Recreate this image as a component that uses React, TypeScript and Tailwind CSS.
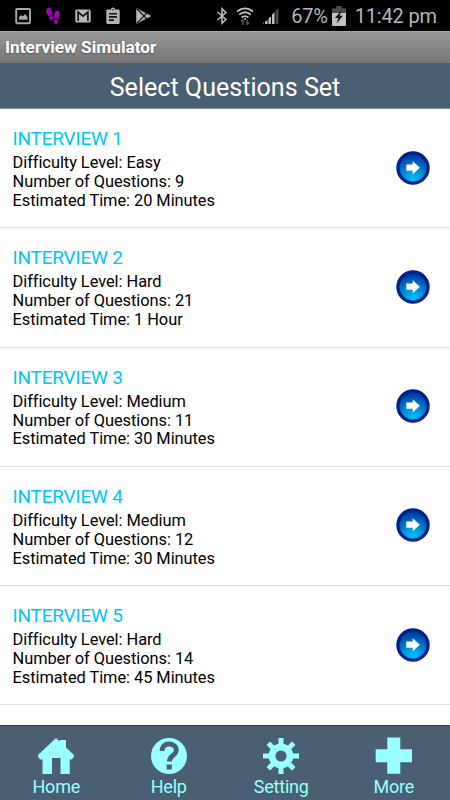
import type { ReactNode } from 'react';

interface InterviewSet {
  title: string;
  difficulty: string;
  questions: number;
  time: string;
}

const interviews: InterviewSet[] = [
  { title: 'INTERVIEW 1', difficulty: 'Easy', questions: 9, time: '20 Minutes' },
  { title: 'INTERVIEW 2', difficulty: 'Hard', questions: 21, time: '1 Hour' },
  { title: 'INTERVIEW 3', difficulty: 'Medium', questions: 11, time: '30 Minutes' },
  { title: 'INTERVIEW 4', difficulty: 'Medium', questions: 12, time: '30 Minutes' },
  { title: 'INTERVIEW 5', difficulty: 'Hard', questions: 14, time: '45 Minutes' },
];

function StatusBar() {
  return (
    <div className="flex h-[31px] shrink-0 items-center justify-between bg-black pr-[13px] pl-[15px] text-[#b5b5b5]">
      <div className="flex items-center gap-[14px]">
        {/* Picture */}
        <svg width="16" height="18" viewBox="0 0 16 18" fill="none">
          <rect x="1.2" y="2" width="13.8" height="14.2" rx="1" stroke="#a8a8a8" strokeWidth="1.9" />
          <path d="M4 12.8V10l2-1.800L8 9.300l2-2.300 2.500 3v2.800z" fill="#a8a8a8" />
        </svg>
        {/* Footsteps */}
        <svg width="16" height="20" viewBox="0 0 16 20" fill="#a300b8">
          <path d="M2 2.400C3.300 .8 5.800 1.500 6.600 4c.5 1.700 .4 3 .7 4.900L3.400 10.300C2 8 .2 5.200 2 2.400z" />
          <path d="M3.800 11l3.700-1.200c1 2.300.6 3.900-.6 4.200C5.200 14.300 4.100 12.800 3.800 11z" />
          <path d="M14 5.200c-2-1.300-4.300 0-4.600 2.200-.2 1.500 0 3-.3 4.900l3.900.7c.8-2.200 3.200-5.800 1-7.800z" />
          <path d="M9 13.300l3.800.7c.1 2.900-.7 4.700-2.200 4.500-1.400-.3-2-2.900-1.600-5.200z" />
        </svg>
        {/* Mail */}
        <svg width="16" height="18" viewBox="0 0 16 18">
          <rect x="0.3" y="2.5" width="15.4" height="13" rx="1.5" fill="#b8b8b8" />
          <path d="M3.100 14V5L8 9.200 12.900 5v9" fill="none" stroke="#111" strokeWidth="1.7" />
        </svg>
        {/* Clipboard */}
        <svg width="16" height="20" viewBox="0 0 16 20">
          <path d="M2.500 3.500H6a2 2 0 014 0h3.500q1.200 0 1.200 1.200v12.100q0 1.200-1.200 1.200h-11q-1.200 0-1.200-1.200V4.700q0-1.200 1.200-1.200z" fill="#b3b3b3" />
          <path d="M4 7.700h8M4 10.900h8M4 14.100h5" stroke="#111" strokeWidth="1.6" />
          <circle cx="8" cy="3.8" r="0.8" fill="#111" />
        </svg>
        {/* Play store */}
        <svg width="18" height="18" viewBox="0 0 18 18">
          <path d="M1.500 1.500l14.500 7.500-14.500 7.500z" fill="#b8b8b8" stroke="#b8b8b8" strokeWidth="0.5" />
          <path d="M1.500 1.500l10.500 10.500M1.500 16.500L12 6" stroke="#111" strokeWidth="1.1" />
        </svg>
      </div>

      <div className="flex items-center pt-px">
        {/* Bluetooth */}
        <svg className="mr-[8px]" width="12" height="18" viewBox="0 0 12 18" fill="none" stroke="#c0c0c0" strokeWidth="1.5">
          <path d="M1.500 5l8.500 7.500-4 3.700V1.800l4 3.700L1.500 13" />
        </svg>
        {/* Wifi */}
        <svg className="mr-[8px]" width="18" height="20" viewBox="0 0 18 20" fill="none" stroke="#c0c0c0" strokeWidth="1.8">
          <path d="M1 5.500Q9-.7 17 5.500M3.200 8.600Q9 4 14.800 8.600M5.600 11.500Q9 8.800 12.400 11.500" />
          <circle cx="9" cy="13" r="1" fill="#c0c0c0" stroke="none" />
          <path d="M7 19v-5.500M5 15.500l2-2.200M11 13.500V19M11 18.800l2.200-2.300" stroke="#555" strokeWidth="1.5" />
        </svg>
        {/* Signal */}
        <svg className="mr-[12px]" width="17" height="18" viewBox="0 0 17 18">
          <path d="M.5 16.500h1.500v-1.200zM3 17h2.500v-4L3 14.800zM6.500 17H9v-7.500l-2.500 2zM10 17h2.500V5L10 7.800z" fill="#c0c0c0" />
          <path d="M13.500 17H16.500V1l-3 3z" fill="#484848" />
        </svg>
        <span className="text-[20px] leading-[31px] tracking-[-0.2px]">67%</span>
        {/* Battery */}
        <svg className="mr-[9px] ml-[4px]" width="14" height="20" viewBox="0 0 14 20">
          <path d="M4.200 0h5.600v2.200H13q1 0 1 1V8H0V3.200q0-1 1-1h3.200z" fill="#4a4a4a" />
          <path d="M0 7h14v12q0 1-1 1H1q-1 0-1-1z" fill="#c0c0c0" />
          <path d="M9.500 4.500L3 12h3.500L4.500 17.500 11 9.800H7.500z" fill="#000" />
        </svg>
        <span className="text-[20px] leading-[31px] tracking-[-0.15px]">11:42 pm</span>
      </div>
    </div>
  );
}

function ArrowButton() {
  return (
    <button type="button" aria-label="Open" className="size-[34px]">
      <svg width="34" height="34" viewBox="0 0 34 34">
        <defs>
          <radialGradient id="arrowFill" gradientUnits="userSpaceOnUse" cx="17" cy="29" r="25">
            <stop offset="0" stopColor="#00c4f8" />
            <stop offset="0.4" stopColor="#0094da" />
            <stop offset="0.75" stopColor="#005cb8" />
            <stop offset="1" stopColor="#003a9c" />
          </radialGradient>
        </defs>
        <circle cx="17" cy="17" r="16.7" fill="#00208c" />
        <circle cx="17" cy="17" r="13.4" fill="url(#arrowFill)" />
        <path d="M10.300 13.600h6.400v-3.400l7.200 6.500-7.200 6.500v-3.400h-6.400z" fill="#fff" />
      </svg>
    </button>
  );
}

function InterviewRow({ item }: { item: InterviewSet }) {
  return (
    <div className="flex h-[119.3px] items-start justify-between border-b border-[#e0e0e0] pt-[18px] pr-[20px] pl-[12.5px]">
      <div className="text-[16.4px] leading-[18.9px] tracking-[-0.05px] text-black">
        <h2 className="mb-[3px] text-[19px] leading-[24px] tracking-[-0.2px] text-[#00c4ff]">{item.title}</h2>
        <p>Difficulty Level: {item.difficulty}</p>
        <p>Number of Questions: {item.questions}</p>
        <p>Estimated Time: {item.time}</p>
      </div>
      <div className="mt-[23.5px]">
        <ArrowButton />
      </div>
    </div>
  );
}

function NavItem({ label, children }: { label: string; children: ReactNode }) {
  return (
    <button type="button" className="flex flex-1 flex-col items-center pt-[11px]">
      <svg width="38" height="38" viewBox="0 0 38 38" fill="#99ffff">
        {children}
      </svg>
      <span className="mt-[1px] text-[18px] leading-[22px] tracking-[-0.2px]">{label}</span>
    </button>
  );
}

export default function App() {
  return (
    <div className="flex h-[800px] w-[450px] flex-col overflow-hidden bg-white font-['Roboto',sans-serif]">
      <StatusBar />

      <div className="flex h-[32px] shrink-0 items-center border-t border-[#a5a5a5] bg-linear-to-b from-[#989898] to-[#777777] pt-px pl-[5px]">
        <h1 className="text-[17.3px] font-bold text-white [text-shadow:0_1px_2px_#555]">Interview Simulator</h1>
      </div>

      <div className="flex h-[46px] shrink-0 items-center justify-center border-b border-[#7d8d9b] bg-[#4a6072] pt-[4px] text-[25.1px] text-white">
        Select Questions Set
      </div>

      <main className="min-h-0 flex-1 overflow-hidden">
        {interviews.map((item) => (
          <InterviewRow key={item.title} item={item} />
        ))}
      </main>

      <nav className="flex h-[75px] shrink-0 border-t border-[#194652] bg-[#4a6072] text-[#99ffff]">
        <NavItem label="Home">
          <path d="M19 1l3.500 3.500V3H29v7.500l8 7.500v1.500L35 22.500h-2.300V37H23.500V21h-8.500v16H5.500V22.500H3L1 19.500V18z" />
        </NavItem>
        <NavItem label="Help">
          <circle cx="19" cy="19" r="18" />
          <path d="M12 14c0-4.700 3-7 7-7s7.300 2.200 7.300 6.200c0 5.300-7 5-7 11.300" fill="none" stroke="#4a6072" strokeWidth="4.8" />
          <path d="M16.600 27.500h5.300v5h-5.300z" fill="#4a6072" />
        </NavItem>
        <NavItem label="Setting">
          <circle cx="19" cy="19" r="9" fill="none" stroke="#99ffff" strokeWidth="6.8" />
          <path
            d="M19 1v8M19 29v8M1 19h8M29 19h8M6.300 6.300l6 6M25.700 25.700l6 6M31.700 6.300l-6 6M12.300 25.700l-6 6"
            stroke="#99ffff"
            strokeWidth="5"
          />
        </NavItem>
        <NavItem label="More">
          <path d="M12.300 0.500h13V12.200H37v13H25.300v11.500h-13V25.200H.7v-13h11.600z" />
        </NavItem>
      </nav>
    </div>
  );
}
